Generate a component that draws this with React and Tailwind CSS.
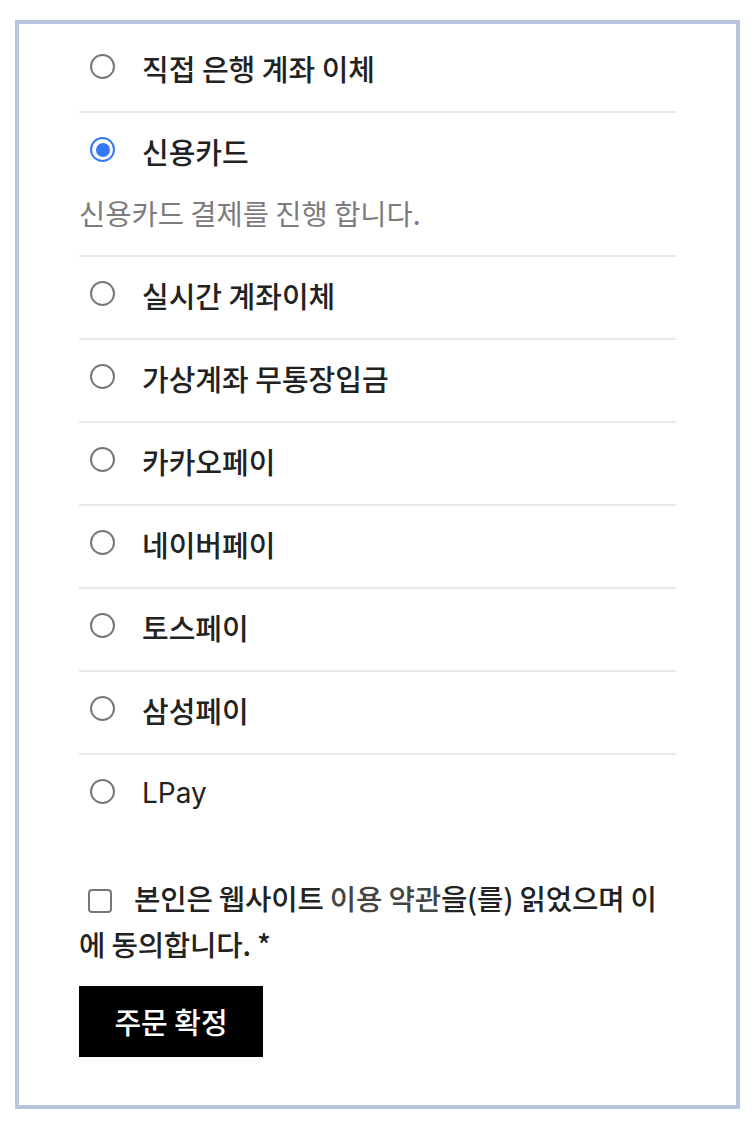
import React from "react";

const methods = [
  { label: "직접 은행 계좌 이체" },
  { label: "신용카드", selected: true, desc: "신용카드 결제를 진행 합니다." },
  { label: "실시간 계좌이체" },
  { label: "가상계좌 무통장입금" },
  { label: "카카오페이" },
  { label: "네이버페이" },
  { label: "토스페이" },
  { label: "삼성페이" },
  { label: "LPay", latin: true },
];

function Radio({ selected }) {
  return selected ? (
    <span className="flex h-[25px] w-[25px] shrink-0 items-center justify-center rounded-full border-2 border-[#3478f6] bg-white">
      <span className="h-[14px] w-[14px] rounded-full bg-[#3478f6]" />
    </span>
  ) : (
    <span className="h-[25px] w-[25px] shrink-0 rounded-full border-2 border-[#777777] bg-white" />
  );
}

export default function App() {
  return (
    <div
      className="bg-white pt-[20px] pl-[15px] pr-[16px] pb-[22px]"
      style={{ fontFamily: '"Noto Sans CJK KR", "Noto Sans", sans-serif' }}
    >
      <div className="border-4 border-[#b8c5dc] px-[60px] pt-[6px] pb-[48px]">
        <ul>
          {methods.map((m, i) => (
            <li
              key={m.label}
              className={
                i < methods.length - 1
                  ? "border-b-2 border-[#e9e9e9] pt-[18px] pb-[22px]"
                  : "pt-[18px] pb-[22px]"
              }
            >
              <div className="flex h-[41px] items-center">
                <span className="ml-[11px] flex -translate-y-[2px]">
                  <Radio selected={m.selected} />
                </span>
                <span
                  className={
                    m.latin
                      ? "ml-[27px] text-[28px] leading-[41px] font-normal text-[#222222]"
                      : "ml-[27px] text-[29px] leading-[41px] font-medium text-[#222222]"
                  }
                  style={m.latin ? { fontFamily: '"Inter", "Noto Sans", sans-serif' } : undefined}
                >
                  {m.label}
                </span>
              </div>
              {m.desc && (
                <p className="mt-[20px] mb-[-1px] text-[28.5px] leading-[42px] text-[#7c7c7c]">
                  {m.desc}
                </p>
              )}
            </li>
          ))}
        </ul>

        <p className="mt-[39px] text-[28.7px] font-medium leading-[46px] tracking-[-0.2px] text-[#222222]">
          <span className="mr-[22px] ml-[9px] inline-block h-[24px] w-[24px] translate-y-[3px] rounded-[4px] border-2 border-[#777777] align-baseline" />
          본인은 웹사이트 <span className="text-[#444444]">이용 약관</span>을(를) 읽었으며 이에 동의합니다. *
        </p>

        <button className="mt-[19px] flex h-[71px] w-[184px] items-center justify-center bg-black text-[29px] font-medium text-white">
          주문 확정
        </button>
      </div>
    </div>
  );
}
